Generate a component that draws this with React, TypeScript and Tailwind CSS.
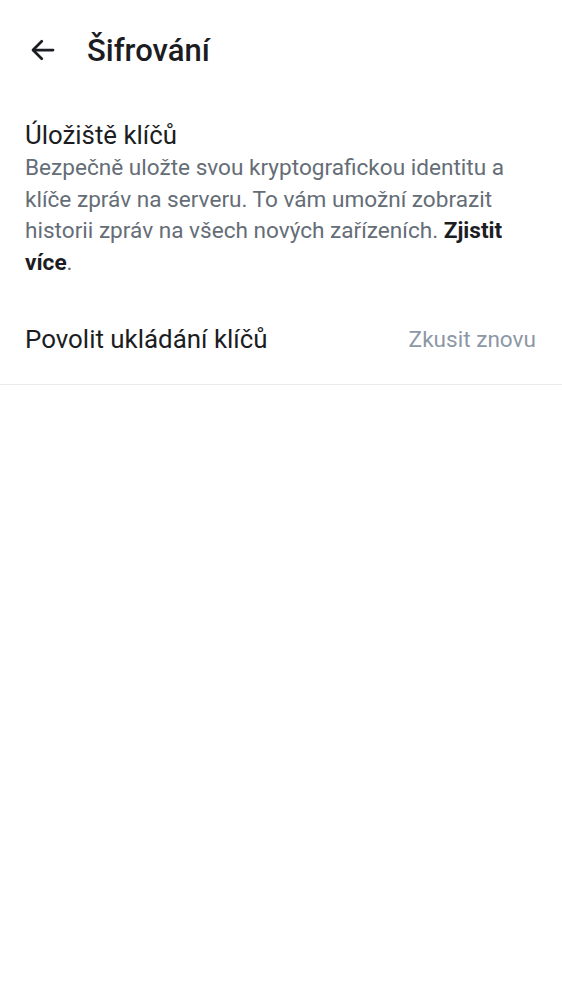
import React from "react";

export default function App() {
  return (
    <div className="min-h-[1000px] w-full bg-white" style={{ fontFamily: "Roboto, 'Noto Sans', sans-serif" }}>
      <header className="flex items-center h-[100px] px-[28px] gap-[29px]">
        <svg width="30" height="30" viewBox="0 0 24 24" fill="none" stroke="#1b1d22" strokeWidth="2.2" strokeLinecap="round" strokeLinejoin="round">
          <path d="M20 12H4.5" />
          <path d="M11 5l-7 7 7 7" />
        </svg>
        <h1 className="text-[31px] font-medium text-[#1b1d22] leading-none">Šifrování</h1>
      </header>
      <section className="px-[25px] pt-[18px]">
        <h2 className="text-[25.8px] text-[#1b1d22] leading-[34px]">Úložiště klíčů</h2>
        <p className="text-[22.6px] text-[#656d77] leading-[31.7px]">
          Bezpečně uložte svou kryptografickou identitu a klíče zpráv na serveru. To vám umožní zobrazit historii zpráv na všech nových zařízeních.{" "}
          <span className="font-bold text-[#1b1d22]">Zjistit více</span>.
        </p>
      </section>
      <div className="flex items-center justify-between pl-[25px] pr-[26px] mt-[17px] h-[89px] border-b border-[#e9ecef]">
        <span className="text-[25.9px] text-[#1b1d22]">Povolit ukládání klíčů</span>
        <span className="text-[22.6px] text-[#8d97a5]">Zkusit znovu</span>
      </div>
    </div>
  );
}
